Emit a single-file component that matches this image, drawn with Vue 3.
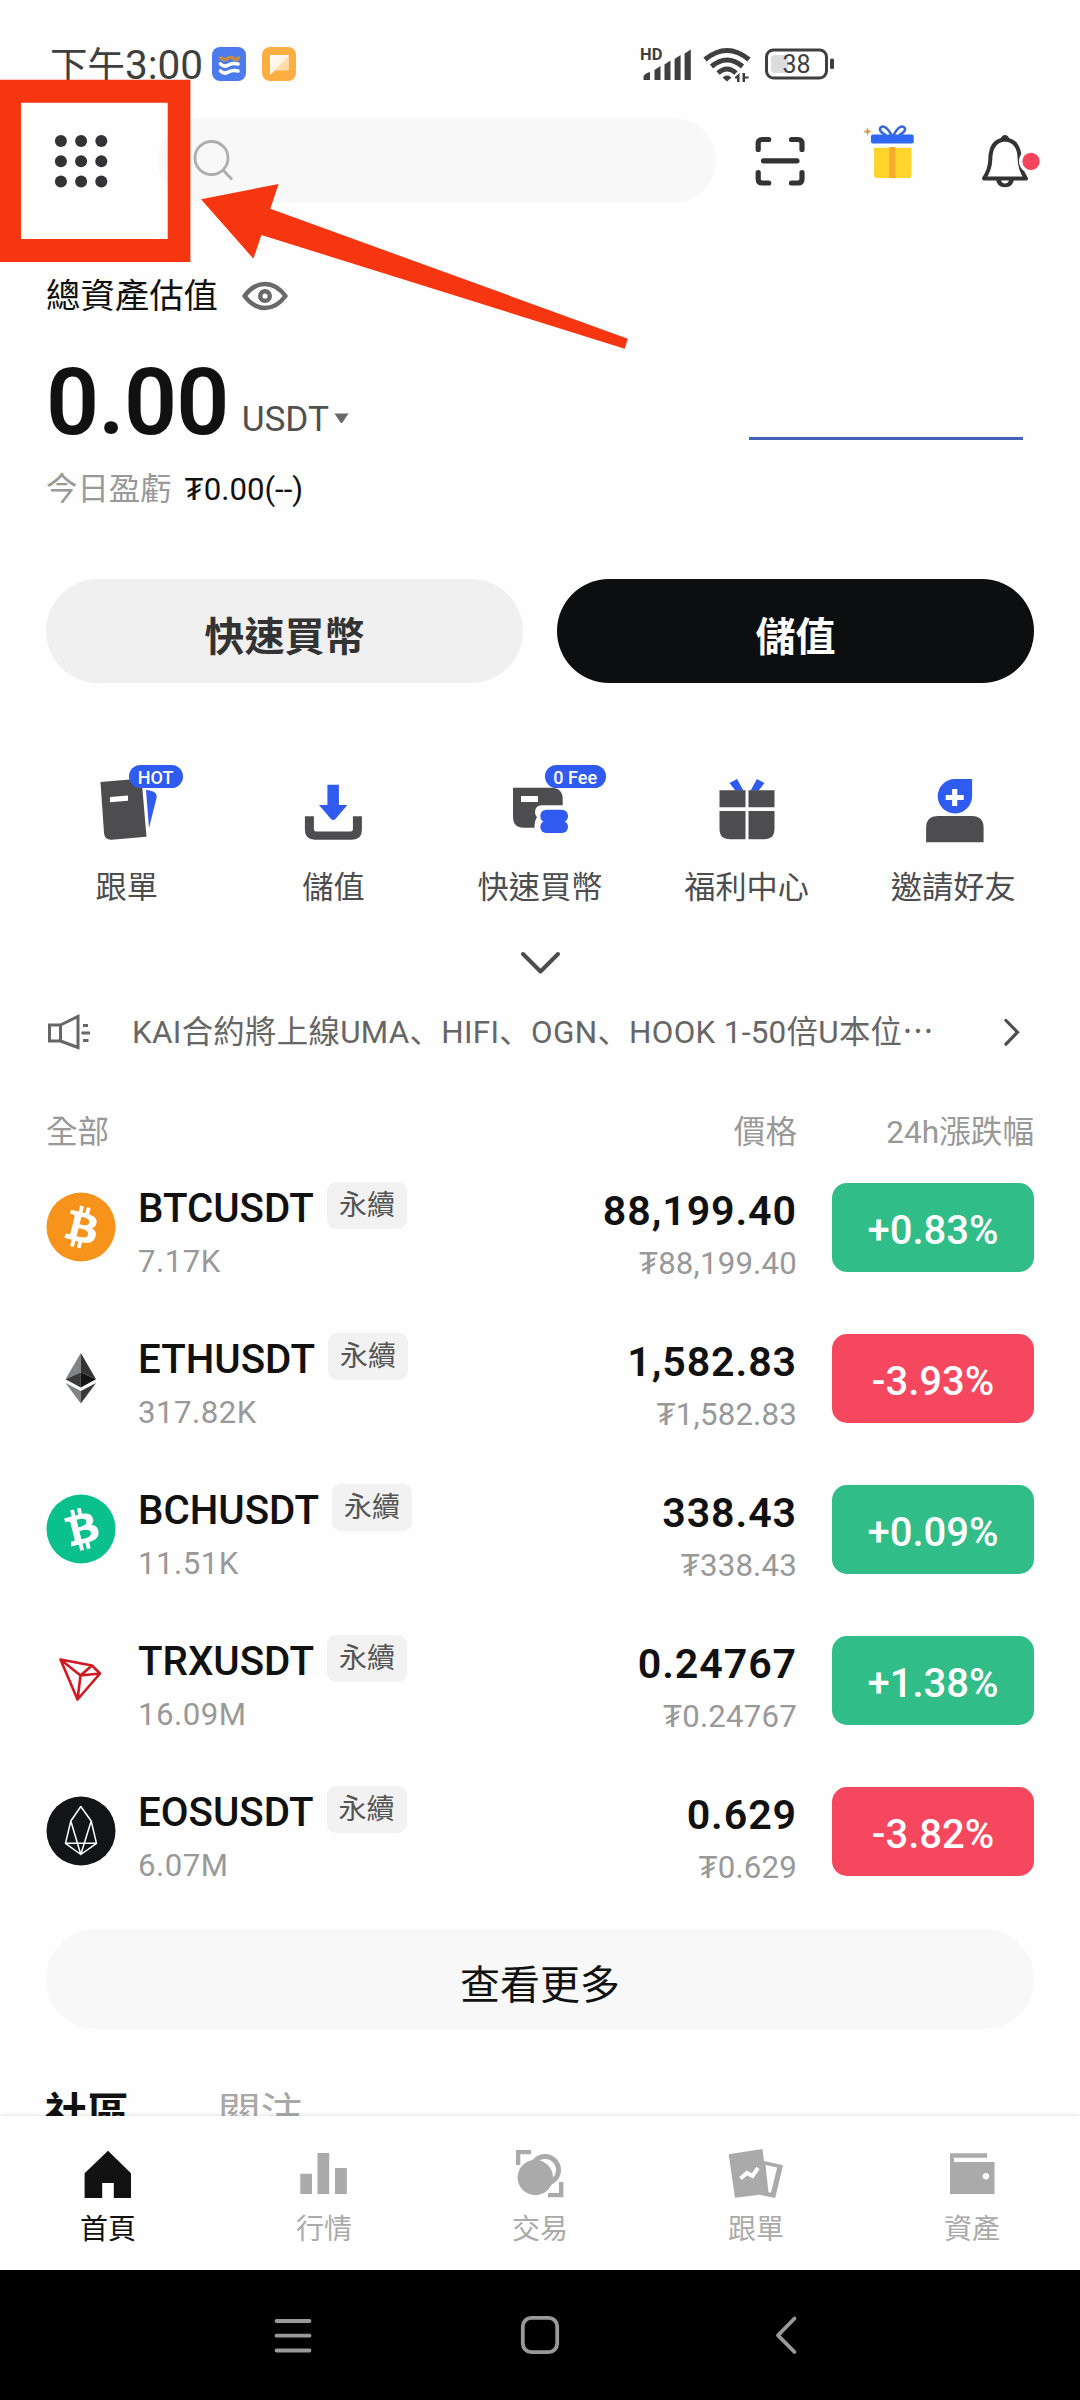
<script setup>
const actions = [
  { id: 'copy', label: '跟單', badge: 'HOT' },
  { id: 'deposit', label: '儲值' },
  { id: 'buy', label: '快速買幣', badge: '0 Fee' },
  { id: 'gift', label: '福利中心' },
  { id: 'invite', label: '邀請好友' },
]

const markets = [
  { coin: 'btc', name: 'BTCUSDT', volume: '7.17K', price: '88,199.40', change: '+0.83%', up: true },
  { coin: 'eth', name: 'ETHUSDT', volume: '317.82K', price: '1,582.83', change: '-3.93%', up: false },
  { coin: 'bch', name: 'BCHUSDT', volume: '11.51K', price: '338.43', change: '+0.09%', up: true },
  { coin: 'trx', name: 'TRXUSDT', volume: '16.09M', price: '0.24767', change: '+1.38%', up: true },
  { coin: 'eos', name: 'EOSUSDT', volume: '6.07M', price: '0.629', change: '-3.82%', up: false },
]

const tabs = [
  { id: 'home', label: '首頁', active: true },
  { id: 'market', label: '行情' },
  { id: 'trade', label: '交易' },
  { id: 'copy', label: '跟單' },
  { id: 'assets', label: '資產' },
]

const bitcoin =
  'M23.189 14.02c.314-2.096-1.283-3.223-3.465-3.975l.708-2.84-1.728-.43-.69 2.765c-.454-.114-.92-.22-1.385-.326l.695-2.783L15.596 6l-.708 2.839c-.376-.086-.746-.17-1.104-.26l.002-.009-2.384-.595-.46 1.846s1.283.294 1.256.312c.7.175.826.638.805 1.006l-.806 3.235c.048.012.11.03.18.057l-.183-.045-1.13 4.532c-.086.212-.303.531-.793.41.018.025-1.256-.313-1.256-.313l-.858 1.978 2.25.561c.418.105.828.215 1.231.318l-.715 2.872 1.727.43.708-2.84c.472.127.93.245 1.378.357l-.706 2.828 1.728.43.715-2.866c2.948.558 5.164.333 6.097-2.333.752-2.146-.037-3.385-1.588-4.192 1.13-.26 1.98-1.003 2.207-2.538zm-3.95 5.538c-.533 2.147-4.148.986-5.32.695l.95-3.805c1.172.293 4.929.872 4.37 3.11zm.535-5.569c-.487 1.953-3.495.96-4.47.717l.86-3.45c.975.243 4.118.696 3.61 2.733z'
</script>

<template>
  <div class="phone">
    <main class="content">
      <div class="status">
        <span class="clock"><span class="ampm">下午</span>3:00</span>
        <svg class="app-blue" width="34" height="34" viewBox="0 0 34 34">
          <rect width="34" height="34" rx="8" fill="#4b7bec" />
          <g fill="none" stroke-width="3.6" stroke-linecap="round">
            <path d="M8.500 11q3.500 3 7 .5t6 0 5-.5" stroke="#c58a45" />
            <path d="M8.500 17q4 3.500 8 1t9.500-1" stroke="#fff" />
            <path d="M8.500 24q4 3.500 8 1t9.500-1" stroke="#fff" />
          </g>
        </svg>
        <svg class="app-orange" width="34" height="34" viewBox="0 0 34 34">
          <defs>
            <linearGradient id="note" x1="0" y1="0" x2="1" y2="1">
              <stop offset="0" stop-color="#fff" />
              <stop offset=".5" stop-color="#fff2df" />
              <stop offset=".52" stop-color="#ffdfb0" />
              <stop offset="1" stop-color="#fcd493" />
            </linearGradient>
          </defs>
          <rect width="34" height="34" rx="8" fill="#fdae40" />
          <path d="M8 8h19v14.500q0 1-1 1H13L8 28z" fill="url(#note)" />
        </svg>
        <svg class="radio" width="112" height="40" viewBox="640 45 112 40" fill="#3f3f3f">
          <text x="640" y="60" class="hd">HD</text>
          <path d="M643.500 80v-3q0-3 6.500-5v8zM654.500 80V70l6-4v14zM664.500 80V64.500l6-4V80zM674.600 80V59l6-4v25zM684.600 80V53.500l6.200-4V80z" />
          <g fill="none" stroke="#3f3f3f" stroke-width="5">
            <path d="M705 59.500q22-18 44 0" />
            <path d="M711.500 66.500q15.500-13 31 0" />
            <path d="M718 73q9-8 18 0" />
          </g>
          <path d="M722.500 77.500q4.500-4 9 0L727 81.500z" />
          <path d="M739.500 73v9h-2.500v-3.500h-2v-1.500zM742.500 82v-9h2.500v3.500h3.500v2H745V82z" />
        </svg>
        <svg class="battery" width="72" height="34" viewBox="764 47 72 34">
          <rect x="771" y="55" width="17" height="18" rx="4" fill="#dcdcdc" />
          <rect x="766.500" y="50" width="60" height="28" rx="7" fill="none" stroke="#3f3f3f" stroke-width="3" />
          <rect x="830" y="58.500" width="4" height="10.500" rx="1.500" fill="#3f3f3f" />
          <text x="796.500" y="73" text-anchor="middle" class="pct">38</text>
        </svg>
      </div>

      <header class="header">
        <svg class="dots" width="54" height="54" viewBox="0 0 54 54" fill="#333236">
          <template v-for="r in 3" :key="r">
            <circle v-for="c in 3" :key="c" :cx="c * 20.200 - 13.300" :cy="r * 20.200 - 13.200" r="6" />
          </template>
        </svg>
        <div class="search">
          <svg width="42" height="42" viewBox="193 140 42 42" fill="none" stroke="#adadad" stroke-width="2.800">
            <circle cx="211.500" cy="158" r="16.500" />
            <path d="M223 170l9 9.500" />
          </svg>
        </div>
        <svg class="scan" width="50" height="50" viewBox="755.500 136.500 50 50" fill="none" stroke="#333" stroke-width="5.200" stroke-linecap="round">
          <path d="M758.700 150v-6q0-4 4-4h6.500M792 140h6.500q4 0 4 4v6M758.700 173v6.500q0 4 4 4h6.500M792 183.500h6.500q4 0 4-4V173M764 161.300h33.500" />
        </svg>
        <svg class="gift" width="52" height="60" viewBox="863 122 52 60">
          <path d="M867.500 127.500l1.200 2.800 2.900 1.200-2.900 1.200-1.200 2.800-1.200-2.800-2.900-1.200 2.900-1.200z" fill="#d9a050" />
          <path d="M891.500 135q-5.500-9.500-9.500-8.300-3.500 1.800-1 5 2 2.300 5 3.300M893.500 135q5.500-9.500 9.500-8.300 3.500 1.800 1 5-2 2.300-5 3.300" fill="none" stroke="#3a69d6" stroke-width="2.600" />
          <rect x="871" y="134.600" width="42.700" height="9" rx="1.800" fill="#2f68f5" />
          <path d="M874 147.700h37.500V175q0 3-3 3H877q-3 0-3-3z" fill="#ffd42b" />
          <rect x="889.300" y="147" width="6" height="31" fill="#faa92f" />
        </svg>
        <svg class="bell" width="62" height="56" viewBox="979 133 62 56">
          <path d="M984 178.500q6-9 6.300-19 .2-19 14.700-20 14.500 1 14.700 20 .3 10 6.300 19z" fill="none" stroke="#333" stroke-width="4" stroke-linejoin="round" />
          <path d="M1000.500 139.500q1-4.500 4.500-4.500t4.500 4.500zM996 178.500h18q-.5 8.800-9 8.800t-9-8.800z" fill="#333" />
          <path d="M1001 180.500h8q-1 3-4 3t-4-3z" fill="#fff" />
          <circle cx="1031" cy="161.300" r="12" fill="#fff" />
          <circle cx="1031" cy="161.300" r="8.600" fill="#f5455c" />
        </svg>
      </header>

      <section class="assets">
        <div class="asset-title">
          <span>總資產估值</span>
          <svg width="46" height="30" viewBox="242 281 46 30" fill="none" stroke="#696969">
            <path d="M244.500 296q9-12 20.500-12t20.500 12q-9 12-20.500 12t-20.500-12z" stroke-width="4.400" stroke-linejoin="round" />
            <circle cx="265" cy="296" r="4.800" stroke-width="4.400" />
          </svg>
        </div>
        <div class="balance">
          <span class="amount">0.00</span>
          <span class="unit">USDT</span>
          <svg class="caret" width="15" height="11" viewBox="0 0 15 11"><path d="M.5.500h14L8.500 9.500q-1 1-2 0z" fill="#696969" /></svg>
          <i class="trend"></i>
        </div>
        <div class="pnl"><span class="muted">今日盈虧</span><span class="pnl-value">₮0.00(--)</span></div>
      </section>

      <div class="buttons">
        <button class="btn light">快速買幣</button>
        <button class="btn dark">儲值</button>
      </div>

      <nav class="actions">
        <div v-for="(a, i) in actions" :key="a.id" class="action">
          <svg v-if="a.id === 'copy'" width="100" height="80" viewBox="76.500 763 100 80">
            <path d="M100 782l41-3.500 5 58.300-35 3q-7 .2-7.500-7z" fill="#4d4d4f" />
            <path d="M109.500 797l18-1.500v5.300l-18 1.500z" fill="#fff" />
            <path d="M145.500 790q12 1 10.500 8l-7.500 30z" fill="#2f5bf0" />
          </svg>
          <svg v-else-if="a.id === 'deposit'" width="100" height="80" viewBox="283.100 763 100 80">
            <path d="M305 816.300h9V829q0 2.500 2.500 2.500h34q2.500 0 2.500-2.500v-12.700h9V830q0 9.700-10 9.700h-37q-10 0-10-9.700z" fill="#4d4d4f" />
            <path d="M327.500 784.700H339V805h8.500l-12 14q-2.200 2-4.400 0l-12-14h8.400z" fill="#2f5bf0" />
          </svg>
          <svg v-else-if="a.id === 'buy'" width="100" height="80" viewBox="490 763 100 80">
            <path d="M513 787.700h38q11.700 0 11.700 11.500v6.100H542q-7 0-7 7 0 3 2 5-2.500 3-2.500 10.400H524q-11 0-11-11z" fill="#4d4d4f" />
            <rect x="521" y="796" width="17" height="6" fill="#fff" />
            <rect x="540.300" y="809.700" width="27.700" height="12.500" rx="6" fill="#2f5bf0" />
            <rect x="540.300" y="820.700" width="27.700" height="12.300" rx="6" fill="#2f5bf0" />
            <rect x="543.500" y="815" width="21.300" height="13" fill="#2f5bf0" />
          </svg>
          <svg v-else-if="a.id === 'gift'" width="100" height="80" viewBox="696.500 763 100 80">
            <path d="M729 783l7.600-4 6.400 11.700h-8zM764 783l-7.600-4-6.400 11.700h8z" fill="#2f5bf0" />
            <path d="M719 790.300h26v17h-26zM748 790.300h26v17h-26zM719 811h26v28.300h-15.500q-10.500 0-10.500-10.500zM748 811h26v17.800q0 10.500-10.500 10.500H748z" fill="#4d4d4f" />
          </svg>
          <svg v-else width="100" height="80" viewBox="902.900 763 100 80">
            <path d="M955 779h17v17.500a17.200 17.200 0 1 1-17-17.500z" fill="#2f5bf0" />
            <path d="M945.600 797.500h18M954.600 789v17" stroke="#fff" stroke-width="5.200" />
            <path d="M926 842.300V828q0-12 12-12h33.500q12 0 12 12v14.300z" fill="#4d4d4f" />
          </svg>
          <span v-if="a.badge" class="badge" :class="'badge-' + i">{{ a.badge }}</span>
          <span class="action-label">{{ a.label }}</span>
        </div>
      </nav>

      <svg class="expand" width="44" height="30" viewBox="518 948 44 30" fill="none" stroke="#4d4d4f" stroke-width="4" stroke-linecap="round" stroke-linejoin="round">
        <path d="M523 954l17.500 17.500L558 954" />
      </svg>

      <div class="notice">
        <svg width="46" height="38" viewBox="46 1013 46 38" fill="none" stroke="#666" stroke-width="3">
          <path d="M49.500 1025h11v16h-11zM60.500 1025l17.500-8.500v31l-17.500-6.500M83 1025.500h5M81.500 1033H90M83 1040.500h5.500" />
        </svg>
        <span class="notice-text">KAI合約將上線UMA<i>、</i>HIFI<i>、</i>OGN<i>、</i>HOOK 1-50倍U本位<span class="dots3">…</span></span>
        <svg class="go" width="20" height="32" viewBox="1002 1016 20 32" fill="none" stroke="#4d4d4f" stroke-width="3.200" stroke-linecap="round"><path d="M1006 1020.500l11.500 11.700-11.500 12" /></svg>
      </div>

      <div class="table-head"><span>全部</span><span class="h-price">價格</span><span class="h-change">24h漲跌幅</span></div>

      <div v-for="m in markets" :key="m.name" class="row">
        <svg class="coin" width="70" height="70" viewBox="0 0 70 70">
          <template v-if="m.coin === 'btc'">
            <circle cx="35" cy="35" r="34.500" fill="#f7931a" />
            <path :d="bitcoin" fill="#fff" transform="translate(.500 .500) scale(2.160)" />
          </template>
          <template v-else-if="m.coin === 'bch'">
            <circle cx="35" cy="35" r="34.500" fill="#0ac18e" />
            <path :d="bitcoin" fill="#fff" transform="rotate(-28 35 35) translate(.500 .500) scale(2.160)" />
          </template>
          <template v-else-if="m.coin === 'eth'">
            <path d="M34.800 10v19.300L19.500 36.200z" fill="#828384" />
            <path d="M34.800 10v19.300L50 36.200z" fill="#343434" />
            <path d="M19.500 36.200l15.300-7V44.500z" fill="#3a3a3b" />
            <path d="M50 36.200l-15.200-7V44.500z" fill="#141414" />
            <path d="M19.500 40l15.300 8v12.500z" fill="#828384" />
            <path d="M50 40l-15.200 8v12.500z" fill="#393939" />
          </template>
          <path v-else-if="m.coin === 'trx'" d="M14.500 14.500l31.500 6 8 8L31.500 54.500zM14.500 14.500l20 16 19.500-2M34.500 30.500l-3 24M46 20.500l-11.500 10" fill="none" stroke="#cf1a22" stroke-width="2.600" stroke-linejoin="round" />
          <template v-else>
            <circle cx="35" cy="35" r="34.500" fill="#121417" />
            <path d="M34.800 10.500L24.800 25l-5.300 22.300 15.300 11.200L50.500 47.300 45.200 25zM24.800 25l10 33.500L45.200 25M19.500 47.300h31" fill="none" stroke="#fff" stroke-width="1.500" stroke-linejoin="round" />
          </template>
        </svg>
        <div class="pair">
          <div class="pair-name"><span>{{ m.name }}</span><span class="tag">永續</span></div>
          <div class="sub volume">{{ m.volume }}</div>
        </div>
        <div class="quote">
          <div class="price">{{ m.price }}</div>
          <div class="sub">₮{{ m.price }}</div>
        </div>
        <div class="change" :class="m.up ? 'up' : 'down'">{{ m.change }}</div>
      </div>

      <button class="more">查看更多</button>

      <div class="feeds"><span class="feed-on">社區</span><span class="feed-off">關注</span></div>
    </main>

    <nav class="tabbar">
      <div v-for="t in tabs" :key="t.id" class="tab" :class="{ active: t.active }">
        <svg v-if="t.id === 'home'" width="60" height="52" viewBox="78 2148 60 52" fill="currentColor">
          <path d="M108 2150.700l23 22.600v24.700h-17.200v-15H102.200v15H84.600v-24.700z" />
        </svg>
        <svg v-else-if="t.id === 'market'" width="60" height="52" viewBox="294 2148 60 52" fill="currentColor">
          <path d="M300.300 2173.700H312V2194h-11.700zM317.500 2153h11.700v41h-11.700zM335 2168h11.800v26H335z" />
        </svg>
        <svg v-else-if="t.id === 'trade'" width="60" height="52" viewBox="510 2148 60 52" fill="currentColor">
          <path d="M516 2150h15v4.300h-10.700v10.700H516zM563.400 2197.300H548V2193h11v-11h4.400z" />
          <circle cx="545" cy="2170" r="13.500" fill="none" stroke="currentColor" stroke-width="5" />
          <circle cx="535.300" cy="2177.500" r="17.700" />
        </svg>
        <svg v-else-if="t.id === 'copy'" width="60" height="52" viewBox="726 2148 60 52" fill="currentColor">
          <path d="M728.700 2154.300l33.800-5.300 1.500 12 19 4.300-7.800 32.700-15.400-3.300-24.800 3z" />
          <path d="M765.500 2165l11.700 2.600-6.200 25h-2.500z" fill="#fff" />
          <path d="M740.500 2178.500l6.500-5.500 5.500 3 5.500-8" fill="none" stroke="#fff" stroke-width="4" />
        </svg>
        <svg v-else width="60" height="52" viewBox="942 2148 60 52" fill="currentColor">
          <path d="M950 2153.300h37v4.500h-33v4.200h40.500v32H950z" />
          <circle cx="986" cy="2176.300" r="3.200" fill="#fff" />
        </svg>
        <span>{{ t.label }}</span>
      </div>
    </nav>

    <footer class="system">
      <svg width="40" height="40" viewBox="0 0 40 40"><path d="M3.500 6h33M3.500 20.700h33M3.500 35.500h33" /></svg>
      <svg width="40" height="40" viewBox="0 0 40 40"><rect x="2.800" y="2.800" width="34.400" height="34.400" rx="8.500" /></svg>
      <svg width="40" height="40" viewBox="0 0 40 40"><path d="M27.500 3.500L11 20.300l16.500 16.700" /></svg>
    </footer>

    <svg class="callout" width="640" height="360" viewBox="0 0 640 360" fill="#f53611">
      <path fill-rule="evenodd" d="M0 79.700h190.400V262H0zM21 102.700V239h146.700V102.700z" />
      <path d="M201 199.300l77.600-15.300-8.300 24.700 357.500 130-3.100 10L261.400 235l-8 23.700z" />
    </svg>
  </div>
</template>

<style>
body {
  background: #fff;
}
</style>

<style scoped>
.phone {
  position: relative;
  display: flex;
  flex-direction: column;
  width: 1080px;
  height: 2400px;
  overflow: hidden;
  background: #fefefe;
  color: #111;
  font-family: Roboto, "Noto Sans CJK TC", sans-serif;
}
.phone svg {
  display: block;
  flex: none;
}
.content {
  height: 2116px;
  overflow: hidden;
}
button {
  border: 0;
  font-family: inherit;
}

/* status bar */
.status {
  display: flex;
  height: 118px;
  padding-left: 50px;
}
.clock {
  width: 162px;
  margin-top: 40px;
  font-size: 40.500px;
  line-height: 50px;
  color: #3f3f3f;
  white-space: nowrap;
}
.ampm {
  font-size: 37.500px;
}
.app-blue,
.app-orange {
  margin-top: 47px;
}
.app-orange {
  margin-left: 16px;
}
.radio {
  margin: 45px 0 0 344px;
}
.battery {
  margin: 47px 0 0 12px;
}
.hd {
  font: 700 16.500px Roboto, sans-serif;
}
.pct {
  font: 400 25px Roboto, sans-serif;
  fill: #3f3f3f;
}

/* header */
.header {
  display: flex;
  height: 85px;
  padding-left: 54px;
}
.dots {
  margin-top: 16px;
}
.search {
  width: 558px;
  height: 85px;
  margin-left: 50px;
  border-radius: 43px;
  background: #f8f8f8;
}
.search svg {
  margin: 22px 0 0 35px;
}
.scan {
  margin: 18px 0 0 39px;
}
.gift {
  margin: 4px 0 0 58px;
}
.bell {
  margin: 15px 0 0 64px;
}

/* assets */
.assets {
  padding: 68px 46px 0;
}
.asset-title {
  display: flex;
  align-items: center;
  gap: 24px;
  height: 50px;
  font-size: 34.400px;
  line-height: 50px;
}
.balance {
  display: flex;
  align-items: baseline;
  height: 110px;
  margin-top: 27px;
}
.amount {
  font-size: 93px;
  font-weight: 600;
  line-height: 110px;
  letter-spacing: -.800px;
}
.unit {
  align-self: flex-start;
  margin: 46px 0 0 13px;
  font-size: 35.200px;
  line-height: 50px;
  color: #505050;
}
.caret {
  margin-left: 5px;
  align-self: flex-start;
  margin-top: 65px;
}
.trend {
  align-self: flex-start;
  width: 274px;
  height: 3px;
  margin: 89px 11px 0 auto;
  background: #4463b8;
}
.pnl {
  display: flex;
  gap: 13px;
  height: 50px;
  margin-top: 7px;
  font-size: 31.400px;
  line-height: 50px;
}
.pnl-value {
  font-size: 31.200px;
}
.muted {
  color: #999;
}

.buttons {
  display: flex;
  justify-content: space-between;
  margin-top: 64px;
  padding: 0 46px;
}
.btn {
  width: 477px;
  height: 104px;
  padding: 5px 0 0;
  border-radius: 52px;
  font-size: 40px;
  font-weight: 700;
}
.light {
  background: #f0f0f0;
  color: #333;
}
.dark {
  background: #0c0e0f;
  color: #fff;
}

/* shortcuts */
.actions {
  display: grid;
  grid-template-columns: repeat(5, 1fr);
  padding: 80px 23.500px 0;
}
.action {
  position: relative;
  display: flex;
  flex-direction: column;
  align-items: center;
}
.action-label {
  margin-top: 20px;
  font-size: 31.200px;
  line-height: 50px;
  color: #4d4d4f;
}
.badge {
  position: absolute;
  top: 2px;
  box-sizing: border-box;
  height: 23px;
  border-radius: 12px;
  background: #2f5bf0;
  color: #fff;
  font-size: 18px;
  font-weight: 500;
  line-height: 25px;
  text-align: center;
}
.badge-0 {
  left: 105px;
  width: 54px;
}
.badge-2 {
  left: 108px;
  width: 61px;
}
.expand {
  margin: 35px auto 0;
}

/* notice */
.notice {
  display: flex;
  align-items: center;
  height: 50px;
  margin-top: 29px;
  padding: 0 58px 0 46px;
}
.notice-text {
  margin: -2px 0 0 40px;
  font-size: 31.400px;
  line-height: 50px;
  letter-spacing: .310px;
  color: #666;
  white-space: nowrap;
}
.notice-text i {
  font-family: "Noto Sans CJK SC", sans-serif;
  font-style: normal;
}
.dots3 {
  font-family: "Noto Sans CJK TC", sans-serif;
}
.go {
  margin-left: auto;
}

/* market list */
.table-head {
  display: flex;
  height: 44px;
  margin-top: 51px;
  padding: 0 46px;
  font-size: 31.600px;
  line-height: 50px;
  color: #999;
}
.h-price {
  flex: 1;
  text-align: right;
}
.h-change {
  width: 237px;
  text-align: right;
}
.row {
  display: flex;
  height: 151px;
  padding: 0 46px;
}
.coin {
  margin-top: 40px;
}
.pair {
  margin: 32px 0 0 22px;
}
.pair-name {
  display: flex;
  height: 50px;
  font-size: 40.300px;
  font-weight: 500;
  line-height: 50px;
}
.tag {
  width: 80px;
  height: 47px;
  margin: -2px 0 0 13px;
  border-radius: 9px;
  background: #f2f2f2;
  font-size: 28px;
  font-weight: 400;
  line-height: 47px;
  text-align: center;
  color: #555;
}
.sub {
  margin-top: 3px;
  font-size: 31.200px;
  line-height: 50px;
  letter-spacing: .200px;
  color: #999;
}
.volume {
  letter-spacing: .500px;
}
.quote {
  flex: 1;
  margin-top: 34px;
  text-align: right;
}
.price {
  font-size: 41.200px;
  font-weight: 600;
  line-height: 50px;
  letter-spacing: .900px;
}
.change {
  box-sizing: border-box;
  width: 202px;
  height: 89px;
  margin: 31px 0 0 35px;
  padding-top: 3px;
  border-radius: 15px;
  color: #fff;
  font-size: 40px;
  font-weight: 500;
  line-height: 89px;
  text-align: center;
}
.up {
  background: #30bd87;
}
.down {
  background: #f5475d;
}
.more {
  display: block;
  width: 988px;
  height: 100px;
  margin: 22px auto 0;
  padding: 5px 0 0;
  border-radius: 50px;
  background: #f8f8f8;
  color: #111;
  font-size: 40px;
}
.feeds {
  display: flex;
  gap: 88px;
  margin-top: 60px;
  padding-left: 45px;
  font-size: 42.500px;
  line-height: 50px;
}
.feed-on {
  font-weight: 700;
}
.feed-off {
  color: #a8a8a8;
}

/* bottom bars */
.tabbar {
  position: relative;
  display: flex;
  height: 154px;
  background: #fff;
  box-shadow: 0 -1px 4px rgba(0, 0, 0, .1);
}
.tab {
  display: flex;
  flex: 1;
  flex-direction: column;
  align-items: center;
  padding-top: 32px;
  color: #aaa;
  font-size: 28px;
}
.tab span {
  margin-top: 10px;
  line-height: 40px;
}
.active {
  color: #111;
}
.system {
  display: flex;
  justify-content: center;
  align-items: center;
  gap: 207px;
  height: 130px;
  background: #000;
}
.system svg {
  fill: none;
  stroke: #999;
  stroke-width: 3.800;
  stroke-linecap: round;
  stroke-linejoin: round;
}

/* annotation */
.callout {
  position: absolute;
  top: 0;
  left: 0;
}
</style>
